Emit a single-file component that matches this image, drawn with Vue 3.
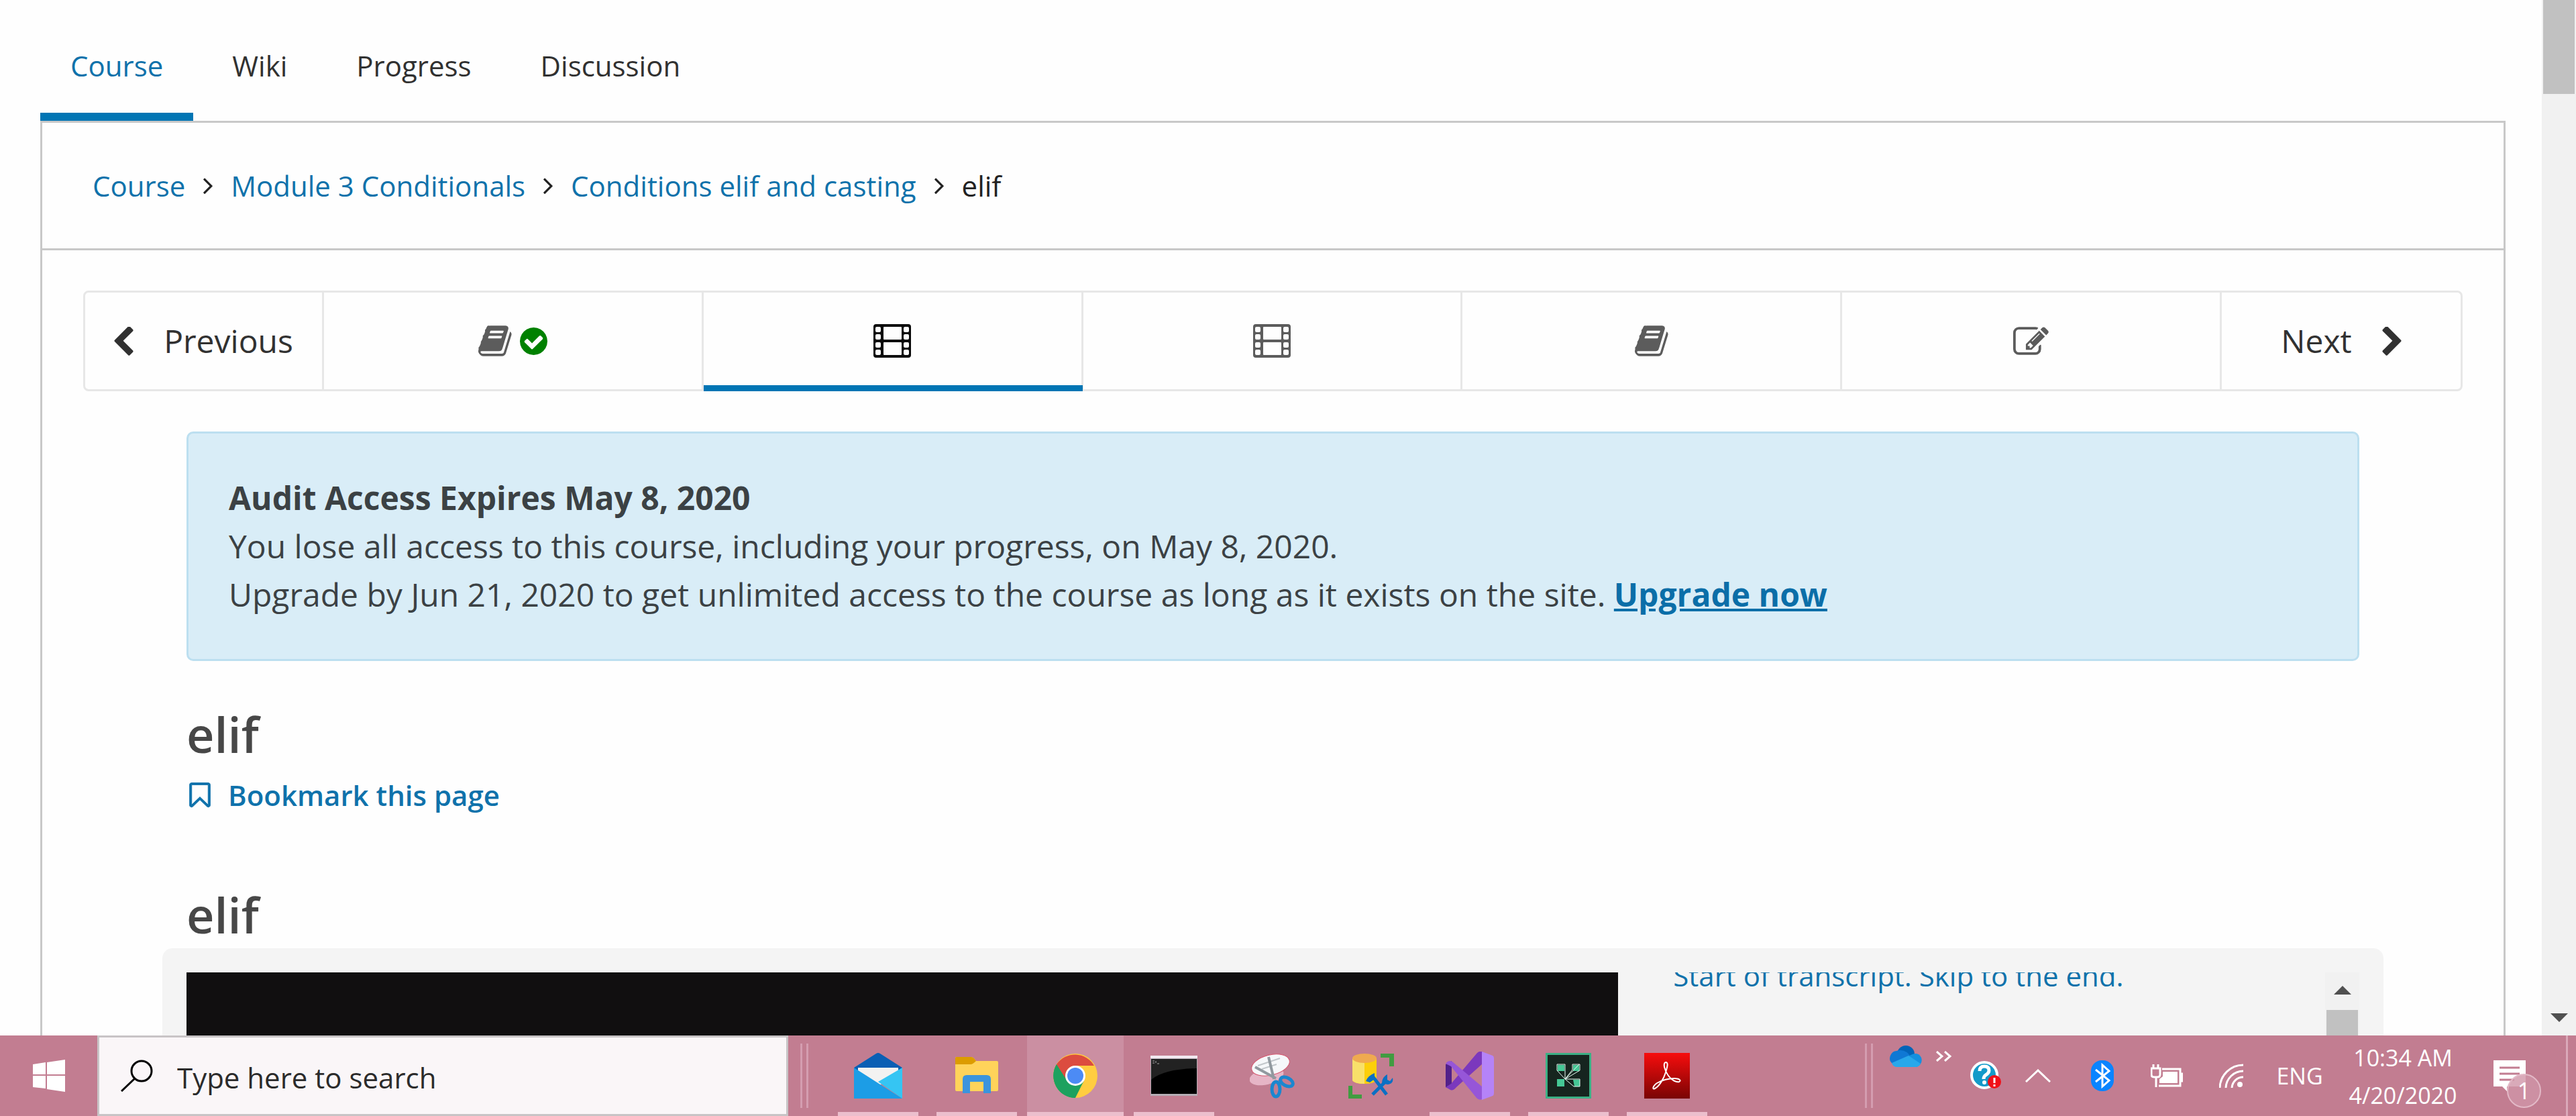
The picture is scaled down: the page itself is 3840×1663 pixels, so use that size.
<script setup>
import { ref } from 'vue'

const tabs = ['Course', 'Wiki', 'Progress', 'Discussion']
const activeTab = ref('Course')
const crumbs = ['Course', 'Module 3 Conditionals', 'Conditions elif and casting']
const units = [
  { icon: 'book', done: true, label: 'Reading, completed' },
  { icon: 'film', label: 'Video' },
  { icon: 'film', label: 'Video' },
  { icon: 'book', label: 'Reading' },
  { icon: 'edit', label: 'Exercise' }
]
const activeUnit = ref(1)
const query = ref('')
</script>

<template>
  <div class="screen">
    <div class="browser">
      <div class="page">
        <nav class="tabs" aria-label="Course sections">
          <a
            v-for="tab in tabs"
            :key="tab"
            href="#"
            class="tab"
            :class="{ active: tab === activeTab }"
            @click.prevent="activeTab = tab"
          >{{ tab }}</a>
        </nav>

        <main class="container">
          <nav class="crumbs" aria-label="Breadcrumb">
            <template v-for="crumb in crumbs" :key="crumb">
              <a href="#">{{ crumb }}</a>
              <svg class="angle" viewBox="589 441 582 1018" aria-hidden="true"><path d="M1171 960q0 13-10 23l-466 466q-10 10-23 10t-23-10l-50-50q-10-10-10-23t10-23l393-393-393-393q-10-10-10-23t10-23l50-50q10-10 23-10t23 10l466 466q10 10 10 23z" /></svg>
            </template>
            <span>elif</span>
          </nav>

          <div class="body">
            <nav class="sequence" aria-label="Units">
              <button class="step prev">
                <svg class="chevron" viewBox="400 64 1056 1584" aria-hidden="true"><path d="M1427 301l-531 531 531 531q19 19 19 45t-19 45l-166 166q-19 19-45 19t-45-19l-742-742q-19-19-19-45t19-45l742-742q19-19 45-19t45 19l166 166q19 19 19 45t-19 45z" /></svg>
                <span>Previous</span>
              </button>
              <button
                v-for="(unit, i) in units"
                :key="i"
                class="unit"
                :class="{ active: i === activeUnit }"
                :aria-label="unit.label"
                @click="activeUnit = i"
              >
                <svg v-if="unit.icon === 'book'" class="book" viewBox="64 128 1680 1536"><path d="M1703 478q40 57 18 129l-275 906q-19 64-76.500 107.500t-122.500 43.500h-923q-77 0-148.500-53.500t-99.500-131.500q-24-67-2-127 0-4 3-27t4-37q1-8-3-21.500t-3-19.500q2-11 8-21t16.500-23.500 16.500-23.500q23-38 45-91.500t30-91.500q3-10 .5-30t-.5-28q3-11 17-28t17-23q21-36 42-92t25-90q1-9-2.500-32t.5-28q4-13 22-30.500t22-22.500q19-26 42.500-84.500t27.500-96.500q1-8-3-25.500t-2-26.500q2-8 9-18t18-23 17-21q8-12 16.500-30.500t15-35 16-36 19.500-32 26.500-23.500 36-11.500 47.500 5.500l-1 3q38-9 51-9h761q74 0 114 56t18 130l-274 906q-36 119-71.500 153.500t-128.500 34.500h-869q-27 0-38 15-11 16-1 43 24 70 144 70h923q29 0 56-15.500t35-41.500l300-987q7-22 5-57 38 15 59 43zm-1064 2q-4 13 2 22.500t20 9.500h608q13 0 25.500-9.500t16.500-22.500l21-64q4-13-2-22.500t-20-9.500h-608q-13 0-25.500 9.500t-16.500 22.500zm-83 256q-4 13 2 22.500t20 9.500h608q13 0 25.500-9.500t16.500-22.500l21-64q4-13-2-22.500t-20-9.500h-608q-13 0-25.500 9.500t-16.500 22.500z" /></svg>
                <svg v-else-if="unit.icon === 'film'" class="film" viewBox="0 0 56 50"><path fill-rule="evenodd" d="M4 0h48a4 4 0 0 1 4 4v42a4 4 0 0 1-4 4H4a4 4 0 0 1-4-4V4a4 4 0 0 1 4-4zM16 4a1 1 0 0 0-1 1v17a1 1 0 0 0 1 1h25a1 1 0 0 0 1-1V5a1 1 0 0 0-1-1zM16 27a1 1 0 0 0-1 1v17a1 1 0 0 0 1 1h25a1 1 0 0 0 1-1V28a1 1 0 0 0-1-1zM5 4a2 2 0 0 0-2 2v4a2 2 0 0 0 2 2h4a2 2 0 0 0 2-2V6a2 2 0 0 0-2-2zM5 15a2 2 0 0 0-2 2v4a2 2 0 0 0 2 2h4a2 2 0 0 0 2-2v-4a2 2 0 0 0-2-2zM5 27a2 2 0 0 0-2 2v4a2 2 0 0 0 2 2h4a2 2 0 0 0 2-2v-4a2 2 0 0 0-2-2zM5 38a2 2 0 0 0-2 2v4a2 2 0 0 0 2 2h4a2 2 0 0 0 2-2v-4a2 2 0 0 0-2-2zM47 4a2 2 0 0 0-2 2v4a2 2 0 0 0 2 2h4a2 2 0 0 0 2-2V6a2 2 0 0 0-2-2zM47 15a2 2 0 0 0-2 2v4a2 2 0 0 0 2 2h4a2 2 0 0 0 2-2v-4a2 2 0 0 0-2-2zM47 27a2 2 0 0 0-2 2v4a2 2 0 0 0 2 2h4a2 2 0 0 0 2-2v-4a2 2 0 0 0-2-2zM47 38a2 2 0 0 0-2 2v4a2 2 0 0 0 2 2h4a2 2 0 0 0 2-2v-4a2 2 0 0 0-2-2z" /></svg>
                <svg v-else class="edit" viewBox="0 128 1792 1408"><path d="M888 1184l116-116-152-152-116 116v56h96v96h56zm440-720q-16-16-33 1l-350 350q-17 17-1 33t33-1l350-350q17-17 1-33zm80 594v190q0 119-84.500 203.500t-203.500 84.500h-832q-119 0-203.500-84.500t-84.500-203.500v-832q0-119 84.500-203.500t203.500-84.500h832q63 0 117 25 15 7 18 23 3 17-9 29l-49 49q-14 14-32 8-23-6-45-6h-832q-66 0-113 47t-47 113v832q0 66 47 113t113 47h832q66 0 113-47t47-113v-126q0-13 9-22l64-64q15-15 35-7t20 29zm-96-738l288 288-672 672h-288v-288zm444 132l-92 92-288-288 92-92q28-28 68-28t68 28l152 152q28 28 28 68t-28 68z" /></svg>
                <svg v-if="unit.done" class="check" viewBox="128 128 1536 1536"><path d="M1412 734q0-28-18-46l-91-90q-19-19-45-19t-45 19l-408 407-226-226q-19-19-45-19t-45 19l-91 90q-18 18-18 46 0 27 18 45l362 362q19 19 45 19 27 0 46-19l543-543q18-18 18-45zm252 162q0 209-103 385.500t-279.500 279.500-385.500 103-385.500-103-279.500-279.500-103-385.500 103-385.500 279.500-279.500 385.500-103 385.500 103 279.500 279.500 103 385.500z" /></svg>
              </button>
              <button class="step next">
                <span>Next</span>
                <svg class="chevron" viewBox="336 64 1056 1584" aria-hidden="true"><path d="M1363 877l-742 742q-19 19-45 19t-45-19l-166-166q-19-19-19-45t19-45l531-531-531-531q-19-19-19-45t19-45l166-166q19-19 45-19t45 19l742 742q19 19 19 45t-19 45z" /></svg>
              </button>
            </nav>

            <div class="content">
              <section class="alert">
                <strong>Audit Access Expires May 8, 2020</strong>
                <p>You lose all access to this course, including your progress, on May 8, 2020.</p>
                <p>Upgrade by Jun 21, 2020 to get unlimited access to the course as long as it exists on the site. <a href="#">Upgrade now</a></p>
              </section>

              <h2>elif</h2>
              <button class="bookmark">
                <svg viewBox="248 108 1320 1586" aria-hidden="true"><path d="M1420 256h-1024v1242l423-406 89-85 89 85 423 406v-1242zm12-128q23 0 44 9 33 13 52.500 41t19.500 62v1289q0 34-19.500 62t-52.500 41q-19 8-44 8-48 0-83-32l-441-424-441 424q-36 33-83 33-23 0-44-9-33-13-52.500-41t-19.500-62v-1289q0-34 19.500-62t52.500-41q21-9 44-9h1048z" /></svg>
                <span>Bookmark this page</span>
              </button>

              <h2 class="block-title">elif</h2>
              <section class="player">
                <div class="video"></div>
                <div class="transcript">
                  <div class="lines"><a href="#">Start of transcript. Skip to the end.</a></div>
                </div>
                <div class="scrollbar inner">
                  <svg class="arrow" viewBox="0 0 26 13"><path d="M13 0l13 13H0z" /></svg>
                  <div class="thumb"></div>
                </div>
              </section>
            </div>
          </div>
        </main>
      </div>
      <div class="scrollbar outer">
        <div class="thumb"></div>
        <svg class="arrow" viewBox="0 0 26 13"><path d="M0 0h26L13 13z" /></svg>
      </div>
    </div>

    <footer class="taskbar">
      <button class="start" aria-label="Start">
        <svg width="48" height="48" viewBox="0 0 48 48" fill="#fff"><path d="M0 7l19-3v18H0zM21 4l27-4v22H21zM0 24h19v19L0 41zM21 24h27v24l-27-4z" /></svg>
      </button>
      <label class="search">
        <svg width="48" height="48" viewBox="0 0 48 48" fill="none" stroke="#000" stroke-width="3"><circle cx="31" cy="17" r="15" /><path d="M21 28L1 47" /></svg>
        <input v-model="query" type="text" placeholder="Type here to search" aria-label="Search" />
      </label>
      <span class="grip"></span>

      <div class="apps">
        <button class="app open" aria-label="Mail">
          <svg width="72" height="68" viewBox="0 0 72 68">
            <path d="M0 22L33 1q3-2 6 0l33 21v10H0z" fill="#0a5fb4" />
            <path d="M6 22h60v10L38 48 6 30z" fill="#f3f2f1" />
            <path d="M72 22v46L36 43z" fill="#35c5f3" />
            <path d="M0 22l72 46H0z" fill="#1c9de6" />
          </svg>
        </button>
        <button class="app open" aria-label="File Explorer">
          <svg width="64" height="56" viewBox="0 0 64 56">
            <path d="M0 2q0-2 2-2h22q3 0 7 6h31q2 0 2 2v41q0 2-2 2H2q-2 0-2-2z" fill="#ffd35a" />
            <path d="M0 2q0-2 2-2h22q3 0 7 6-5 5-8 5H0z" fill="#dc9c00" />
            <path d="M11 54V33q0-6 6-6h30q6 0 6 6v21H42V37H22v17z" fill="#3b94dd" />
          </svg>
        </button>
        <button class="app open current" aria-label="Chrome">
          <svg width="66" height="66" viewBox="0 0 66 66">
            <circle cx="33" cy="33" r="33" fill="#ffcd40" />
            <path d="M33 33L32 66A33 33 0 0 1 5 16z" fill="#1da15f" />
            <path d="M33 66L46 40 33 48 18 40 5 16A33 33 0 0 0 33 66z" fill="#1da15f" />
            <path d="M5 16A33 33 0 0 1 61 18H33A15 15 0 0 0 19 38z" fill="#dc4c3f" />
            <circle cx="33" cy="33" r="15" fill="#fff" />
            <circle cx="33" cy="33" r="12" fill="#4c8bf5" />
          </svg>
        </button>
        <button class="app open" aria-label="Command Prompt">
          <svg width="70" height="60" viewBox="0 0 70 60">
            <rect width="70" height="60" fill="#b5adb5" /><rect width="70" height="4" fill="#f2e9f0" />
            <rect x="1" y="5" width="68" height="52" fill="#000" />
            <path d="M1 5h68v14Q20 20 1 36z" fill="#222" />
            <path d="M3 8h3M3 11h3M8 8v3M10 12h3" stroke="#aaa" fill="none" />
          </svg>
        </button>
        <button class="app" aria-label="Snipping Tool">
          <svg width="68" height="68" viewBox="0 0 68 68">
            <ellipse cx="25" cy="35" rx="26" ry="12" transform="rotate(-14 25 35)" fill="#e6b5c6" />
            <ellipse cx="31" cy="18" rx="29" ry="15" transform="rotate(-14 31 18)" fill="#f6f8fa" stroke="#d6546c" />
            <path d="M12 19l33-11M18 24l22-7" stroke="#c2c7cb" stroke-width="2" />
            <path d="M8 21l31 17M28 6l8 33" stroke="#91999f" stroke-width="4" />
            <ellipse cx="55" cy="43" rx="10" ry="6" transform="rotate(28 55 43)" fill="none" stroke="#1b87cf" stroke-width="5" />
            <ellipse cx="39" cy="54" rx="6" ry="11" fill="none" stroke="#1b87cf" stroke-width="5" />
          </svg>
        </button>
        <button class="app" aria-label="Database Tools">
          <svg width="68" height="68" viewBox="0 0 68 68">
            <path d="M6 8h36v32q-3 6-18 6T6 41z" fill="#fccf0a" /><path d="M6 8h18v38Q9 46 6 41z" fill="#f8e06a" />
            <ellipse cx="24" cy="8" rx="18" ry="7" fill="#efaa50" />
            <path d="M48 1h20v19h-7V7H48zM0 49h6v13h14v6H0z" fill="#419c41" />
            <path d="M37 36l20 26M54 44L36 62" stroke="#0a70c4" stroke-width="5" fill="none" />
            <path d="M26 42q3-8 13-12v9l-7 5zM50 45q0-9 8-13v8l4 2 4-5q2 9-8 10z" fill="#0a70c4" />
          </svg>
        </button>
        <button class="app open" aria-label="Visual Studio">
          <svg width="72" height="72" viewBox="0 0 72 72">
            <path d="M0 19L9 14V56L0 53z" fill="#52218a" />
            <path d="M0 53L8 48 47 2q3-3 8-2v18L16 53q-5 6-9 4z" fill="#7b38bd" />
            <path d="M0 18q4-6 10-3l44 37v19q-4 2-8-2L8 22z" fill="#9656d8" />
            <path d="M54 0l16 6q2 1 2 4v52q0 3-2 4l-16 6z" fill="#b583f8" />
          </svg>
        </button>
        <button class="app open" aria-label="Knowledge Tool">
          <svg width="68" height="68" viewBox="0 0 68 68">
            <rect width="68" height="68" fill="#3bb085" /><rect x="3" y="3" width="62" height="62" fill="#16251f" />
            <path d="M18 18h10v9H18zM41 18h9v9h-9zM17 39h11v11H17zM41 40h10v10h-8z" fill="#45c795" />
            <path d="M17 17h12v22L17 26zM29 39L40 25v-8h11v9L29 39zM29 39L50 17M29 39h22v11h-9z" fill="none" stroke="#e8fff5" stroke-width="1" />
          </svg>
        </button>
        <button class="app open" aria-label="Acrobat Reader">
          <svg width="68" height="68" viewBox="0 0 68 68">
            <defs><linearGradient id="pdf" x1="0" y1="0" x2="0" y2="1"><stop offset="0" stop-color="#f70d0d" /><stop offset="1" stop-color="#790404" /></linearGradient></defs>
            <rect width="68" height="68" fill="url(#pdf)" />
            <path d="M32 14c-5 1-1 13 4 20s12 10 16 9c4-2 0-5-7-5-9 0-19 3-26 7-7 5-7 10-3 8 6-3 13-14 16-24s4-15 0-15z" fill="none" stroke="#fff" stroke-width="2" />
          </svg>
        </button>
      </div>

      <div class="tray">
        <span class="grip"></span>
        <div class="toolbar">
          <svg width="48" height="32" viewBox="0 0 48 32">
            <circle cx="24" cy="13" r="13" fill="#0364b8" /><path d="M10 8q14-4 22 10L4 27Q-2 22 1 15 4 8 10 8z" fill="#0f78d4" />
            <path d="M28 16q14-9 19 2 3 9-7 14z" fill="#1490df" /><path d="M3 26l25-11 18 12q-2 5-8 5H11q-6 0-8-6z" fill="#28a8ea" />
          </svg>
          <svg width="24" height="16" viewBox="0 0 24 16" fill="none" stroke="#fff" stroke-width="3"><path d="M1 1l8 7-8 7M13 1l8 7-8 7" /></svg>
        </div>
        <button class="tray-item help" aria-label="Help">
          <svg width="46" height="44" viewBox="0 0 46 44">
            <circle cx="21" cy="21" r="19" fill="#149ac9" stroke="#fff" stroke-width="4" />
            <path d="M14 15q0-7 7-7t7 6q0 4-5 7-3 2-3 6" stroke="#fff" stroke-width="5" fill="none" /><circle cx="21" cy="32" r="3" fill="#fff" />
            <circle cx="36" cy="31" r="10" fill="#f01018" /><path d="M36 25v8M36 35v3" stroke="#fff" stroke-width="3" />
          </svg>
        </button>
        <button class="tray-item" aria-label="Show hidden icons">
          <svg width="38" height="20" viewBox="0 0 38 20" fill="none" stroke="#fff" stroke-width="3"><path d="M1 19L19 2l18 17" /></svg>
        </button>
        <button class="tray-item" aria-label="Bluetooth">
          <svg width="34" height="46" viewBox="0 0 34 46"><rect width="34" height="46" rx="16" fill="#0a84ff" /><path d="M7 14l20 16-10 9V7l10 9L7 32" fill="none" stroke="#fff" stroke-width="3" /></svg>
        </button>
        <button class="tray-item" aria-label="Battery">
          <svg width="48" height="34" viewBox="0 0 48 34" fill="none" stroke="#fff" stroke-width="3">
            <path d="M17 7h27v25H12M44 14h3v11h-3M4 0v6M11 0v6M1 6h13v9q0 4-4 4H5q-4 0-4-4zM8 19v15" /><path d="M18 11h22v17H13v-6l5-4z" fill="#fff" stroke="none" />
          </svg>
        </button>
        <button class="tray-item" aria-label="Network">
          <svg width="36" height="36" viewBox="0 0 36 36" fill="none" stroke="#fff" stroke-width="3"><path d="M1 36A35 35 0 0 1 36 2M10 36A26 26 0 0 1 36 11M19 36A17 17 0 0 1 36 20" /><circle cx="31" cy="31" r="4" fill="#fff" stroke="none" /></svg>
        </button>
        <button class="tray-item lang">ENG</button>
        <button class="tray-item clock"><span>10:34 AM</span><span>4/20/2020</span></button>
        <button class="tray-item notices" aria-label="Notifications">
          <svg width="48" height="46" viewBox="0 0 48 46"><path d="M0 0h48v39H20v7l-7-7H0z" fill="#fff" /><path d="M9 11h30M9 20h30M9 29h22" stroke="#c27d91" stroke-width="3" /></svg>
          <span class="badge">1</span>
        </button>
        <span class="desktop-edge"></span>
      </div>
    </footer>
  </div>
</template>

<style>
html, body { margin: 0; background: #fefefe; }
body { overflow: hidden; }
</style>

<style scoped>
.screen {
  display: flex;
  flex-direction: column;
  height: 100vh;
  font-family: "Open Sans", "Noto Sans", sans-serif;
  font-size: 42px;
  line-height: 60px;
  color: #313131;
}
.screen *, .screen *::after { box-sizing: border-box; }
button { margin: 0; padding: 0; border: 0; background: none; font: inherit; color: inherit; }
a { color: #0f72ab; text-decoration: none; }
svg { display: block; flex: none; }
p, h2 { margin: 0; }

.browser { display: flex; flex: 1; min-height: 0; overflow: hidden; }
.page { flex: 1; min-width: 0; overflow: hidden; padding: 0 54px 0 60px; }

.tabs { display: flex; gap: 13px; padding-top: 68px; }
.tab { padding: 0 45px 40px; border-bottom: 12px solid transparent; color: #313131; }
.tab.active { color: #0f72ab; border-color: #0075b4; }

.container { border: 3px solid #c8c8c8; min-height: 100%; }
.crumbs { display: flex; align-items: center; gap: 27px; padding: 64px 75px 63px; border-bottom: 3px solid #c8c8c8; }
.angle { width: 14px; height: 24px; fill: #222; }
.crumbs span { color: #222; }

.body { padding: 60px 61px 0 61px; }
.sequence { display: flex; height: 150px; border: 3px solid #e7e7e7; border-radius: 8px; font-size: 48px; }
.step { display: flex; align-items: center; justify-content: center; gap: 45px; width: 356px; flex: none; }
.prev { border-right: 3px solid #e7e7e7; }
.chevron { width: 29px; height: 43px; fill: #313131; }
.unit { display: flex; flex: 1; align-items: center; justify-content: center; gap: 12px; border-right: 3px solid #e7e7e7; fill: #5c5c5c; }
.unit.active { position: relative; fill: #0a0a0a; }
.unit.active::after { content: ""; position: absolute; left: 0; right: -2px; bottom: -3px; height: 9px; background: #0075b4; }
.book { width: 50px; height: 46px; }
.film { width: 56px; height: 50px; }
.edit { width: 53px; height: 42px; }
.check { width: 41px; height: 41px; fill: #008100; }

.content { padding: 60px 154px 0; }
.alert { padding: 60px; border: 3px solid #bcdff0; border-radius: 10px; background: #d9edf7; font-size: 48px; line-height: 72px; color: #3b4144; }
.alert strong { display: block; font-weight: 700; }
.alert a { font-weight: 700; text-decoration: underline; color: #0b6ea8; }
h2 { margin-top: 64px; font-size: 72px; line-height: 90px; font-weight: 600; color: #474747; }
.bookmark { display: flex; align-items: center; gap: 26px; margin-top: 16px; padding-left: 4px; font-weight: 600; color: #0f72ab; }
.bookmark svg { width: 32px; height: 38px; fill: #0f72ab; stroke: #0f72ab; stroke-width: 40px; }
.block-title { margin-top: 103px; }
.player { display: flex; height: 900px; margin: 5px -36px 0; padding: 36px; border-radius: 15px; background: #f4f4f4; }
.video { flex: 2135 0 0; background: #110f10; }
.transcript { flex: 1054 0 0; min-width: 0; overflow: hidden; }
.lines { margin-top: -25px; padding-left: 82px; }

.scrollbar { display: flex; flex-direction: column; align-items: center; flex: none; width: 51px; background: #f1f1f1; }
.scrollbar .thumb { width: 47px; background: #c1c1c1; }
.arrow { width: 26px; height: 13px; fill: #505050; }
.outer { justify-content: space-between; padding-bottom: 20px; }
.outer .thumb { height: 140px; }
.inner { gap: 23px; padding-top: 20px; }
.inner .thumb { flex: 1; }

.taskbar { display: flex; flex: none; height: 120px; background: #c27d91; }
.start { display: flex; align-items: center; justify-content: center; width: 145px; flex: none; }
.search { display: flex; align-items: center; gap: 36px; width: 1030px; padding-left: 32px; border: 3px solid #c8c4c6; background: #faf6f8; }
.search input { flex: 1; min-width: 0; height: 64px; padding: 4px 0 0; border: 0; outline: 0; background: none; font: inherit; color: #2b2b2b; }
.search input::placeholder { color: #2b2b2b; opacity: 1; }
.grip { flex: none; width: 12px; margin: 12px 0; border: solid #d49db0; border-width: 0 3px; }
.search + .grip { margin-left: 18px; }
.apps { display: flex; gap: 3px; margin-left: 32px; }
.app { position: relative; display: flex; align-items: center; justify-content: center; width: 144px; }
.app.open::after { content: ""; position: absolute; left: 12px; right: 12px; bottom: 0; height: 6px; background: #ecbfcd; }
.app.current { background: #cb8fa2; }
.app.current::after { left: 0; right: 0; }

.tray { display: flex; margin-left: auto; padding-right: 12px; font-size: 34px; line-height: 56px; color: #fff; }
.toolbar { display: flex; align-items: center; gap: 21px; height: 62px; padding: 0 20px 0 25px; }
.tray-item { display: flex; align-items: center; justify-content: center; width: 96px; }
.help { width: 60px; }
.lang { width: 108px; }
.clock { flex-direction: column; width: 200px; padding-top: 2px; }
.notices { position: relative; justify-content: flex-start; width: 143px; padding-left: 35px; }
.badge { position: absolute; left: 55px; top: 57px; width: 51px; height: 51px; border: 2px solid #e3b9c7; border-radius: 50%; background: #cf95a8cc; line-height: 46px; text-align: center; }
.desktop-edge { width: 3px; background: #dba9b9; }
</style>
